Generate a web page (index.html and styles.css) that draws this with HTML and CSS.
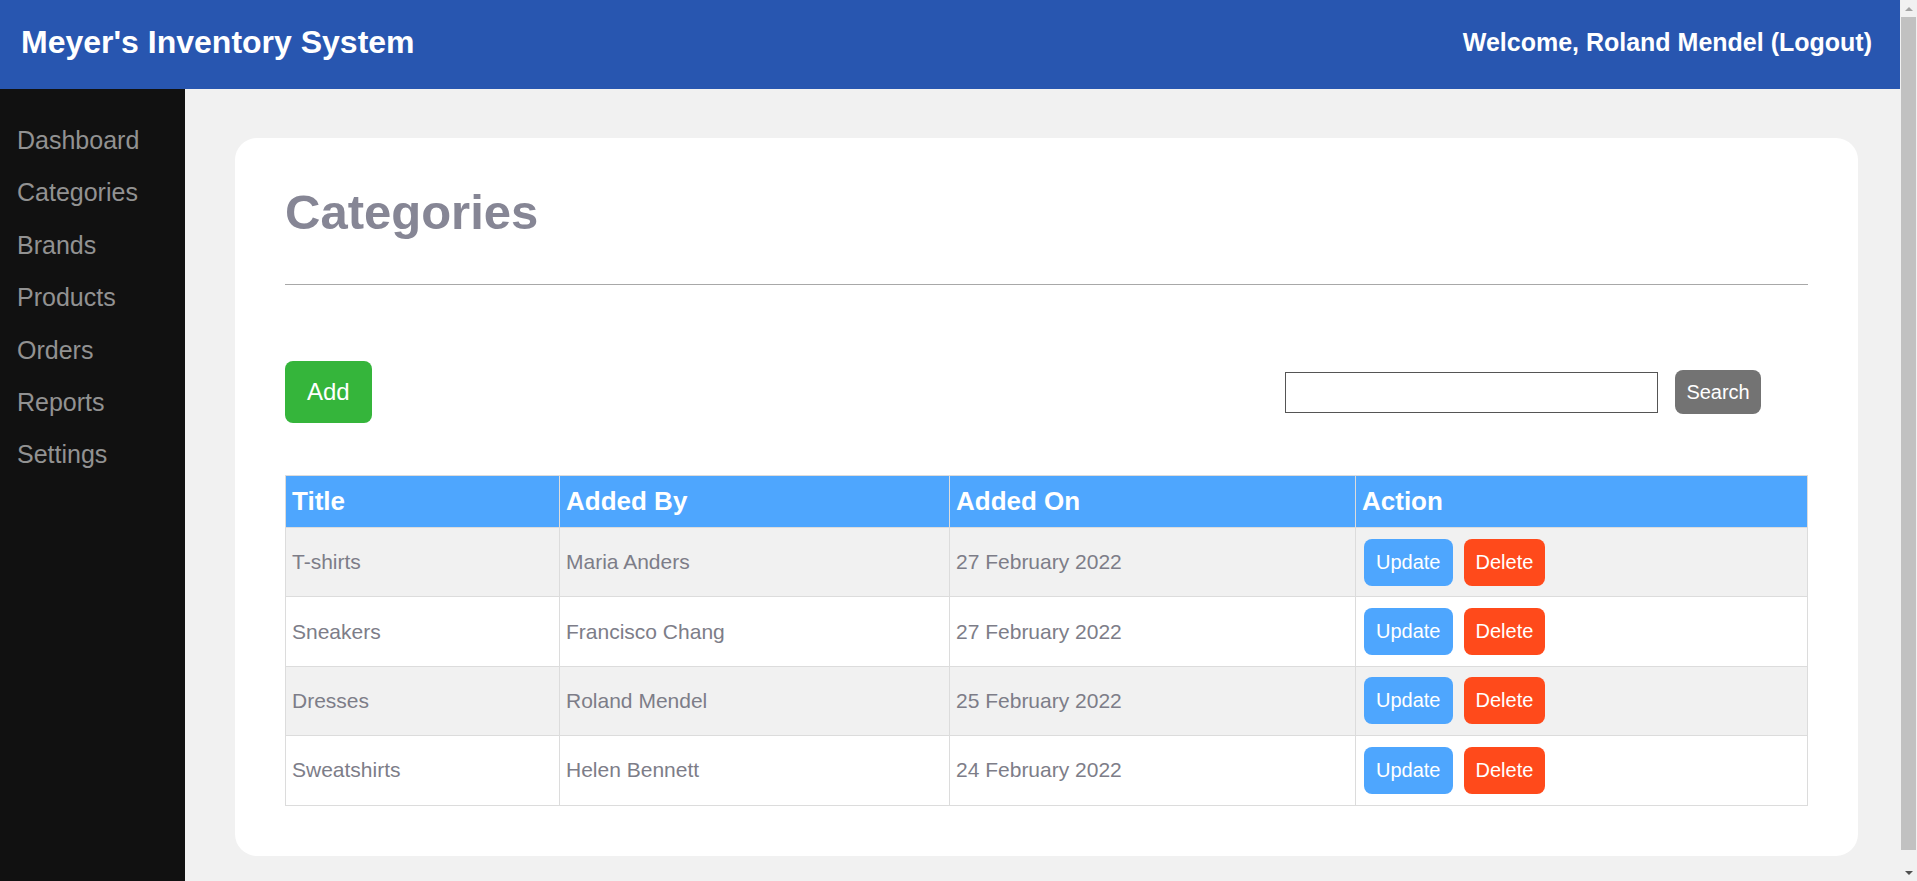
FILE: index.html
```html
<!DOCTYPE html>
<html lang="en">
<head>
<meta charset="utf-8">
<title>Categories - Meyer's Inventory System</title>
<link rel="stylesheet" href="styles.css">
</head>
<body>
<div class="page">
  <header class="topbar">
    <div class="brand">Meyer's Inventory System</div>
    <div class="user">Welcome, Roland Mendel (Logout)</div>
  </header>
  <div class="layout">
    <nav class="sidebar">
      <a class="nav-item" href="#">Dashboard</a>
      <a class="nav-item" href="#">Categories</a>
      <a class="nav-item" href="#">Brands</a>
      <a class="nav-item" href="#">Products</a>
      <a class="nav-item" href="#">Orders</a>
      <a class="nav-item" href="#">Reports</a>
      <a class="nav-item" href="#">Settings</a>
    </nav>
    <main class="main">
      <section class="card">
        <h1 class="page-title">Categories</h1>
        <hr class="divider">
        <div class="toolbar">
          <button class="btn btn-add" type="button">Add</button>
          <form class="search" onsubmit="return false">
            <input class="search-input" type="text">
            <button class="btn btn-search" type="submit">Search</button>
          </form>
        </div>
        <table class="data-table">
          <colgroup>
            <col class="col-title">
            <col class="col-by">
            <col class="col-on">
            <col class="col-action">
          </colgroup>
          <thead>
            <tr><th>Title</th><th>Added By</th><th>Added On</th><th>Action</th></tr>
          </thead>
          <tbody>
            <tr>
              <td>T-shirts</td><td>Maria Anders</td><td>27 February 2022</td>
              <td class="actions"><button class="btn btn-update" type="button">Update</button><button class="btn btn-delete" type="button">Delete</button></td>
            </tr>
            <tr>
              <td>Sneakers</td><td>Francisco Chang</td><td>27 February 2022</td>
              <td class="actions"><button class="btn btn-update" type="button">Update</button><button class="btn btn-delete" type="button">Delete</button></td>
            </tr>
            <tr>
              <td>Dresses</td><td>Roland Mendel</td><td>25 February 2022</td>
              <td class="actions"><button class="btn btn-update" type="button">Update</button><button class="btn btn-delete" type="button">Delete</button></td>
            </tr>
            <tr>
              <td>Sweatshirts</td><td>Helen Bennett</td><td>24 February 2022</td>
              <td class="actions"><button class="btn btn-update" type="button">Update</button><button class="btn btn-delete" type="button">Delete</button></td>
            </tr>
          </tbody>
        </table>
      </section>
    </main>
  </div>
</div>
<div class="scrollbar" aria-hidden="true">
  <span class="sb-arrow sb-up"></span>
  <span class="sb-thumb"></span>
  <span class="sb-arrow sb-down"></span>
</div>
</body>
</html>
```

FILE: styles.css
```css
* { box-sizing: border-box; }

html, body {
  margin: 0;
  padding: 0;
}

body {
  font-family: "Liberation Sans", Arial, sans-serif;
  background: #f1f1f1;
  color: #333;
}

.page {
  margin-right: 17px;
}

.topbar {
  height: 89px;
  background: #2856b0;
  color: #ffffff;
  display: flex;
  align-items: center;
  justify-content: space-between;
  padding: 0 28px 5px 21px;
}

.brand {
  font-size: 32px;
  font-weight: bold;
}

.user {
  font-size: 25px;
  font-weight: bold;
}

.layout {
  display: flex;
  align-items: stretch;
}

.sidebar {
  width: 185px;
  flex: 0 0 185px;
  background: #111111;
  padding-top: 25px;
  display: flex;
  flex-direction: column;
}

.nav-item {
  display: block;
  color: #929292;
  text-decoration: none;
  font-size: 25px;
  line-height: 28.4px;
  padding: 12px 17px;
}

.main {
  flex: 1 1 auto;
  padding: 49px 42px 50px 50px;
}

.card {
  background: #ffffff;
  border-radius: 22px;
  padding: 50px;
}

.page-title {
  margin: 0;
  font-size: 49px;
  line-height: 48px;
  font-weight: bold;
  color: #868695;
}

.divider {
  margin: 48px 0 0;
  border: 0;
  border-top: 1px solid #a8a8a8;
  height: 0;
}

.toolbar {
  margin-top: 76px;
  display: flex;
  align-items: center;
  justify-content: space-between;
}

.btn {
  font-family: "Liberation Sans", Arial, sans-serif;
  border: 0;
  color: #ffffff;
  border-radius: 8px;
  cursor: pointer;
}

.btn-add {
  background: #35b53b;
  font-size: 24px;
  line-height: 28px;
  padding: 17px 22px;
}

.search {
  display: flex;
  align-items: center;
  gap: 17px;
  margin: 0 47px 0 0;
}

.search-input {
  width: 373px;
  height: 41px;
  border: 1px solid #555555;
  font-size: 18px;
  padding: 0 6px;
  background: #fff;
}

.btn-search {
  background: #737373;
  font-size: 20px;
  line-height: 23px;
  width: 86px;
  height: 44px;
  padding: 0;
}

.data-table {
  margin-top: 52px;
  width: 100%;
  border-collapse: collapse;
  table-layout: fixed;
}

.col-title { width: 274px; }
.col-by { width: 390px; }
.col-on { width: 406px; }

.data-table th {
  background: #4ea6fe;
  color: #ffffff;
  font-size: 26px;
  line-height: 31px;
  font-weight: bold;
  text-align: left;
  padding: 10px 6px;
  border: 1px solid #dcdcdc;
}

.data-table td {
  font-size: 21px;
  line-height: 24px;
  color: #7d7d88;
  padding: 10px 6px;
  border: 1px solid #dcdcdc;
  vertical-align: middle;
  height: 69.4px;
}

.data-table tbody tr:nth-child(odd) {
  background: #f1f1f1;
}

.data-table tbody tr:nth-child(even) {
  background: #ffffff;
}

.data-table td.actions {
  padding-left: 8px;
}

.btn-update,
.btn-delete {
  font-size: 20px;
  line-height: 23px;
  padding: 12px 12px;
  vertical-align: middle;
}

.btn-update {
  background: #4ea6fe;
}

.btn-delete {
  background: #ff4a1b;
  margin-left: 11px;
}

/* imitation of the browser's vertical scrollbar */
.scrollbar {
  position: fixed;
  top: 0;
  right: 0;
  bottom: 0;
  width: 17px;
  background: #f1f1f1;
  display: flex;
  flex-direction: column;
  align-items: center;
}

.sb-arrow {
  flex: 0 0 17px;
  width: 17px;
  display: flex;
  align-items: center;
  justify-content: center;
}

.sb-arrow::before {
  content: "";
  width: 0;
  height: 0;
  border-left: 4px solid transparent;
  border-right: 4px solid transparent;
}

.sb-up::before {
  border-bottom: 4px solid #a3a3a3;
}

.sb-down::before {
  border-top: 4px solid #505050;
}

.sb-thumb {
  flex: 1 1 auto;
  width: 15px;
  margin: 0 0 14px;
  background: #c1c1c1;
}
```
